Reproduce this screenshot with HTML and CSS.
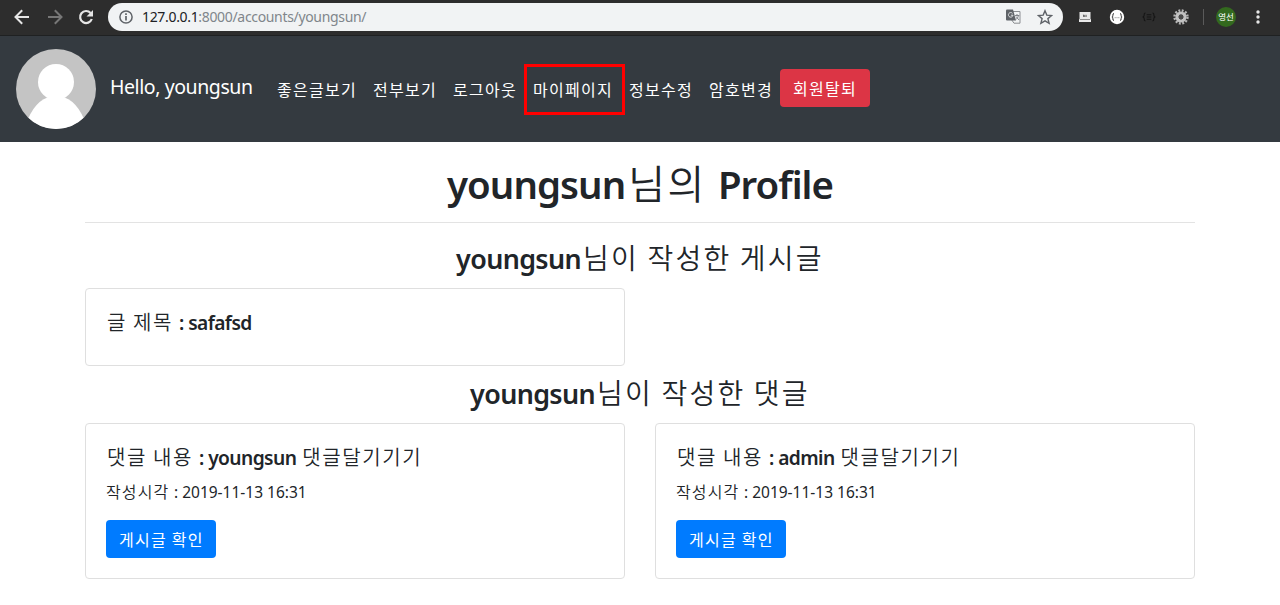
FILE: index.html
```html
<!DOCTYPE html>
<html lang="ko">
<head>
<meta charset="utf-8">
<title>Profile</title>
<link rel="stylesheet" href="styles.css">
</head>
<body>
<div class="toolbar">
  <svg class="back" width="16" height="16" viewBox="0 0 16 16" fill="none" stroke="#e6e6e6" stroke-width="2"><path d="M15 8H2M8.2 1.3L1.5 8l6.7 6.7"/></svg>
  <svg class="forward" width="16" height="16" viewBox="0 0 16 16" fill="none" stroke="#777" stroke-width="2"><path d="M1 8h13M7.8 1.3L14.5 8l-6.7 6.7"/></svg>
  <svg class="reload" width="16" height="16" viewBox="0 0 16 16"><path d="M13.8 10A6 6 0 1 1 12.6 4" fill="none" stroke="#e6e6e6" stroke-width="2.2"/><path d="M15 1v6.6H8.5z" fill="#e6e6e6"/></svg>
  <div class="address">
    <svg width="14" height="14" viewBox="0 0 14 14"><circle cx="7" cy="7" r="6.1" fill="none" stroke="#5f6368" stroke-width="1.5"/><path d="M7 6v4.5M7 3.3v1.6" stroke="#5f6368" stroke-width="1.7"/></svg>
    <span class="url"><b>127.0.0.1</b>:8000/accounts/youngsun/</span>
    <svg class="translate" width="15" height="15" viewBox="0 0 15 15"><path d="M5 2.5h9v11.7H8L5 10" fill="#f1f3f4" stroke="#8b8e92"/><path d="M0 1.5Q0 .5 1 .5h6l3 11H1q-1 0-1-1z" fill="#5f6368"/><path d="M6.5 4.4A2.3 2.3 0 1 0 7 6.2H4.9" fill="none" stroke="#dfe1e3"/><path d="M9 6.5h4.3M11 5v1.5M12.5 6.5Q12 9 10 10.5M10 7.5l3 3.5" fill="none" stroke="#777b80" stroke-width=".9"/></svg>
    <svg class="star" width="16" height="16" viewBox="0 0 16 16"><path d="M8 1.7l1.8 4.4 4.8.4-3.7 3.1 1.2 4.7L8 11.8l-4.1 2.5 1.2-4.7-3.7-3.1 4.8-.4z" fill="none" stroke="#5f6368" stroke-width="1.4"/></svg>
  </div>
  <svg class="ext-screen" width="12" height="10" viewBox="0 0 12 10"><path d="M.5 0h11v7.2h.5V10H0V7.2h.5z" fill="#e9e9e9"/><path d="M1 7.5h10" stroke="#666" stroke-width=".7"/><path d="M4.5 5V2.8l1.4 2V2.8M7.2 5V2.8" fill="none" stroke="#555" stroke-width=".8"/></svg>
  <svg class="ext-json" width="16" height="16" viewBox="0 0 16 16"><circle cx="8" cy="8" r="7.2" fill="#fff"/><path d="M5 4.5q-1.3 0-1.1 1.7T2.9 8q1.2.1 1 1.8T5 11.5M11 4.5q1.3 0 1.1 1.7t1 1.8q-1.2.1-1 1.8T11 11.5" fill="none" stroke="#333"/><path d="M5.7 8.7h.9M7.55 8.7h.9M9.4 8.7h.9" stroke="#777"/></svg>
  <svg class="ext-braces" width="14" height="10" viewBox="0 0 14 10" fill="none" stroke="#151515" stroke-width="1.1"><path d="M3.5 1Q2 1 2.2 2.8T.7 5q1.7.2 1.5 2T3.5 9M10.5 1q1.5 0 1.3 1.8T13.3 5q-1.7.2-1.5 2t-1.3 2M4.7 2.8h4.6M4.7 5h4.6M4.7 7.2h4.6"/></svg>
  <svg class="ext-gear" width="16" height="16" viewBox="0 0 16 16"><circle cx="8" cy="8" r="6.5" fill="none" stroke="#b5b5b5" stroke-width="2.4" stroke-dasharray="1.9 1.5"/><circle cx="8" cy="8" r="4" fill="none" stroke="#c2c2c2" stroke-width="3.2"/><circle cx="8" cy="8" r="2.4" fill="#4c4c4c"/></svg>
  <span class="divider"></span>
  <span class="user">영선</span>
  <svg class="dots" width="4" height="14" viewBox="0 0 4 14" fill="#e6e6e6"><circle cx="2" cy="2" r="1.7"/><circle cx="2" cy="7" r="1.7"/><circle cx="2" cy="12" r="1.7"/></svg>
</div>
<nav class="navbar">
  <svg class="avatar" width="80" height="80" viewBox="0 0 80 80"><clipPath id="round"><circle cx="40" cy="40" r="40"/></clipPath><g clip-path="url(#round)"><path d="M0 0h80v80H0z" fill="#c4c4c4"/><circle cx="40" cy="33" r="18" fill="#fff"/><path d="M12 70Q22 47 40 47t28 23v12H12z" fill="#fff"/></g></svg>
  <a class="brand">Hello, youngsun</a>
  <a class="link">좋은글보기</a>
  <a class="link">전부보기</a>
  <a class="link">로그아웃</a>
  <a class="link marked">마이페이지</a>
  <a class="link">정보수정</a>
  <a class="link">암호변경</a>
  <a class="button danger">회원탈퇴</a>
</nav>
<main class="container">
  <h1><span class="latin name">youngsun</span>님의 <span class="latin">Profile</span></h1>
  <hr>
  <h3><span class="latin name">youngsun</span>님이 작성한 게시글</h3>
  <div class="grid">
    <div class="card post"><h5>글 제목 <span class="latin">: safafsd</span></h5></div>
  </div>
  <h3><span class="latin name">youngsun</span>님이 작성한 댓글</h3>
  <div class="grid">
    <div class="card">
      <h5>댓글 내용 <span class="latin">: youngsun</span> 댓글달기기기</h5>
      <p>작성시각 <span class="date">: 2019-11-13 16:31</span></p>
      <a class="button primary">게시글 확인</a>
    </div>
    <div class="card">
      <h5>댓글 내용 <span class="latin">: admin</span> 댓글달기기기</h5>
      <p>작성시각 <span class="date">: 2019-11-13 16:31</span></p>
      <a class="button primary">게시글 확인</a>
    </div>
  </div>
</main>
</body>
</html>
```
FILE: styles.css
```css
* { box-sizing: border-box; }
body {
  margin: 0;
  background: #fff;
  color: #212529;
  font: 16px/24px "Noto Sans CJK KR", sans-serif;
  white-space: nowrap;
  overflow: hidden;
}
svg { display: block; flex: none; }
.toolbar {
  height: 36px;
  padding: 0 20px 2px 14px;
  display: flex;
  align-items: center;
  background: #2d2d2d;
  border-bottom: 1px solid #1f2122;
}
.forward { margin-left: 17px; }
.reload { margin-left: 15px; }
.address {
  width: 955px;
  height: 28px;
  margin-left: 14px;
  padding: 0 10px 0 11px;
  border-radius: 14px;
  background: #f1f3f4;
  display: flex;
  align-items: center;
}
.url {
  margin-left: 9px;
  font: 14px/20px "Noto Sans", sans-serif;
  letter-spacing: -0.33px;
  color: #80868b;
}
.url b { font-weight: 400; color: #202124; }
.translate { margin-left: auto; }
.star { margin-left: 16px; }
.ext-screen { margin-left: 16px; }
.ext-json { margin-left: 18px; }
.ext-braces { margin-left: 17px; }
.ext-gear { margin-left: 17px; }
.divider { width: 1px; height: 16px; margin-left: 14px; background: #5a5a5a; }
.user {
  width: 20px;
  height: 20px;
  margin-left: 12px;
  border-radius: 50%;
  background: #33691e;
  color: #fff;
  font-size: 8.5px;
  line-height: 19px;
  text-align: center;
}
.dots { margin-left: auto; }
.navbar {
  height: 106px;
  padding: 0 16px;
  display: flex;
  align-items: center;
  background: #343a40;
  color: #fff;
}
.brand {
  width: 150px;
  margin: -5px 0 0 14px;
  font: 19.5px/30px "Noto Sans", sans-serif;
  letter-spacing: -0.42px;
}
.link { padding: 8px; letter-spacing: 0.08em; }
.navbar .brand + .link { margin-left: 9px; }
.marked { position: relative; }
.marked::after {
  content: "";
  position: absolute;
  inset: -5px -4px -6px -1px;
  border: 3px solid red;
}
.button {
  display: inline-block;
  height: 38px;
  padding: 6px 13px;
  border-radius: 4px;
  color: #fff;
  line-height: 26px;
  letter-spacing: 0.08em;
  word-spacing: -1px;
}
.danger { width: 90px; margin: -2px 0 0 -1px; background: #dc3545; }
.primary { width: 110px; background: #007bff; }
.container { width: 1110px; margin: 0 auto; padding-top: 16px; }
h1, h3, h5 { margin: 0; font-weight: 350; word-spacing: -0.06em; }
h1, h3 { text-align: center; }
h1 { height: 48px; font-size: 40px; line-height: 48px; letter-spacing: 0.06em; }
h3 { height: 34px; font-size: 28px; line-height: 34px; letter-spacing: 0.08em; }
h5 { height: 24px; font-size: 20px; line-height: 23px; letter-spacing: 0.08em; padding-left: 1px; }
.latin {
  font-family: "Noto Sans", sans-serif;
  font-size: 0.96em;
  font-weight: 600;
  letter-spacing: -0.024em;
  word-spacing: 0;
}
h5 .latin { letter-spacing: -0.03em; }
.name { margin-right: 0.08em; }
hr { margin: 16px 0 17px; border: 0; border-top: 1px solid #e3e3e3; }
.grid { display: grid; grid-template-columns: 540px 540px; gap: 30px; margin: 14px 0 9px; }
.card {
  height: 156px;
  padding: 21px 20px;
  border: 1px solid #dfdfdf;
  border-radius: 4px;
}
.post { height: 78px; }
p { height: 24px; margin: 10px 0 17px; line-height: 24px; font-weight: 350; letter-spacing: 0.07em; word-spacing: -1px; }
.date { font-family: "Noto Sans", sans-serif; font-size: 15.5px; font-weight: 400; letter-spacing: 0; word-spacing: 0; }
```
